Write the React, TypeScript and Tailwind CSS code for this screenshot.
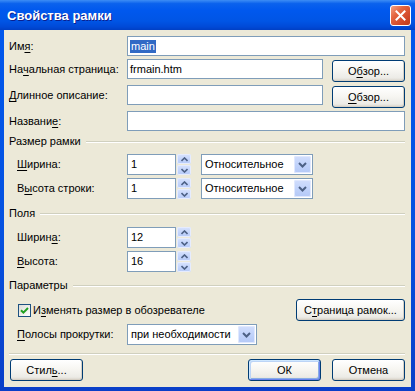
import React from "react";

const U = ({ children }: { children: React.ReactNode }) => (
  <span className="underline underline-offset-[2px] decoration-[1px]">{children}</span>
);

function XPButton({
  children,
  className,
  def,
}: {
  children: React.ReactNode;
  className: string;
  def?: boolean;
}) {
  return (
    <div
      className={
        "h-[22px] shrink-0 rounded-[3px] border border-[#003c74] bg-[linear-gradient(180deg,#ffffff_0%,#f7f6f2_45%,#ecebe6_85%,#d8d2c7_100%)] flex items-center justify-center " +
        (def
          ? "shadow-[inset_1px_1px_0_#cee7ff,inset_-1px_-1px_0_#6982ee,inset_2px_2px_0_#bcd4f6,inset_-2px_-2px_0_#89ade4] "
          : "shadow-[inset_-1px_-1px_0_#d6d0c5] ") +
        className
      }
    >
      {children}
    </div>
  );
}

function Input({ className, children }: { className: string; children?: React.ReactNode }) {
  return (
    <div
      className={
        "h-[20px] shrink-0 border border-[#7f9db9] bg-white flex items-center pl-[2px] leading-[13px] " + className
      }
    >
      {children}
    </div>
  );
}

function Header({ children, mt }: { children: React.ReactNode; mt: string }) {
  return (
    <div className={"h-[13px] flex items-center " + mt}>
      <span className="leading-[13px]">{children}</span>
      <div className="flex-1 ml-[5px] flex flex-col">
        <div className="h-px bg-[#d0d0bf]" />
        <div className="h-px bg-white" />
      </div>
    </div>
  );
}

function Chevron() {
  return (
    <svg width="9" height="6" viewBox="0 0 9 6">
      <path d="M1 1 L4.5 4.5 L8 1" fill="none" stroke="#4d6185" strokeWidth="2" />
    </svg>
  );
}

function Dropdown({ text, className }: { text: string; className: string }) {
  return (
    <div
      className={
        "h-[21px] shrink-0 border border-[#7f9db9] bg-white flex items-center pl-[3px] pr-[1px] " + className
      }
    >
      <span className="flex-1 leading-[13px]">{text}</span>
      <div className="w-[17px] h-[17px] rounded-[2px] bg-[linear-gradient(180deg,#d2defc_0%,#c1d3fb_50%,#b4c8f6_100%)] shadow-[inset_0_0_0_1px_#e0e8fe] flex items-center justify-center">
        <Chevron />
      </div>
    </div>
  );
}

function Spin({ value }: { value: string }) {
  return (
    <div className="flex h-[21px] shrink-0">
      <div className="w-[49px] h-[21px] border border-[#7f9db9] bg-white flex items-center pl-[3px] leading-[13px]">
        {value}
      </div>
      <div className="ml-px w-[14px] h-[21px] flex flex-col gap-px">
        <div className="flex-1 rounded-[2px] bg-[linear-gradient(180deg,#d8e3fd_0%,#c1d3fb_60%,#b6caf7_100%)] shadow-[inset_0_0_0_1px_#e6ecfe] flex items-center justify-center">
          <svg width="7" height="5" viewBox="0 0 7 5">
            <path d="M0.5 4 L3.5 1 L6.5 4" fill="none" stroke="#4d6185" strokeWidth="1.6" />
          </svg>
        </div>
        <div className="flex-1 rounded-[2px] bg-[linear-gradient(180deg,#d8e3fd_0%,#c1d3fb_60%,#b6caf7_100%)] shadow-[inset_0_0_0_1px_#e6ecfe] flex items-center justify-center">
          <svg width="7" height="5" viewBox="0 0 7 5">
            <path d="M0.5 1 L3.5 4 L6.5 1" fill="none" stroke="#4d6185" strokeWidth="1.6" />
          </svg>
        </div>
      </div>
    </div>
  );
}

export default function App() {
  return (
    <div className="w-[415px] h-[391px] flex flex-col bg-[linear-gradient(180deg,#0058ee_0%,#0652e0_60%,#0a3fc8_100%)] font-['Liberation_Sans',Arial,sans-serif] text-[11px] text-black overflow-hidden">
      {/* Title bar */}
      <div className="h-[30px] shrink-0 flex items-start bg-[linear-gradient(180deg,#3d8df5_0%,#0b62ed_12%,#0058ee_35%,#0055e5_70%,#0049d6_90%,#003fc4_100%)]">
        <span className="ml-[7px] mt-[8px] flex-1 text-white font-bold text-[13px] leading-[15px] [text-shadow:1px_1px_0_#0a1f8f]">
          Свойства рамки
        </span>
        <div className="mt-[5px] mr-[4px] w-[21px] h-[21px] rounded-[3px] border border-white bg-[linear-gradient(135deg,#f3a184_0%,#e4653f_35%,#d2492a_70%,#c03b1a_100%)] flex items-center justify-center">
          <svg width="11" height="11" viewBox="0 0 11 11">
            <path d="M1.5 1.5 L9.5 9.5 M9.5 1.5 L1.5 9.5" stroke="#ffffff" strokeWidth="2" strokeLinecap="square" />
          </svg>
        </div>
      </div>

      {/* Client */}
      <div className="flex-1 mx-[4px] mb-[4px] bg-[#ece9d8] flex flex-col pl-[5px] pr-[6px]">
        {/* Имя */}
        <div className="mt-[6px] h-[20px] flex">
          <div className="w-[118px] shrink-0 flex items-center">
            Им<U>я</U>:
          </div>
          <Input className="flex-1">
            <span className="bg-[#316ac5] text-white pl-px pr-px leading-[13px]">main</span>
          </Input>
        </div>

        {/* Начальная страница */}
        <div className="mt-[3px] h-[23px] flex items-start">
          <div className="w-[118px] h-[20px] shrink-0 flex items-center">
            На<U>ч</U>альная страница:
          </div>
          <Input className="w-[196px]">frmain.htm</Input>
          <XPButton className="ml-[9px] mt-px w-[73px]">
            О<U>б</U>зор...
          </XPButton>
        </div>

        {/* Длинное описание */}
        <div className="mt-[3px] h-[23px] flex items-start">
          <div className="w-[118px] h-[20px] shrink-0 flex items-center">
            <U>Д</U>линное описание:
          </div>
          <Input className="w-[196px]" />
          <XPButton className="ml-[9px] mt-px w-[73px]">
            <U>О</U>бзор...
          </XPButton>
        </div>

        {/* Название */}
        <div className="mt-[3px] h-[20px] flex">
          <div className="w-[118px] shrink-0 flex items-center">
            Названи<U>е</U>:
          </div>
          <Input className="flex-1" />
        </div>

        <Header mt="mt-[4px]">Размер рамки</Header>

        <div className="mt-[6px] h-[21px] flex items-center">
          <div className="w-[118px] shrink-0 pl-[8px]">
            <U>Ш</U>ирина:
          </div>
          <Spin value="1" />
          <Dropdown className="ml-[10px] w-[112px]" text="Относительное" />
        </div>

        <div className="mt-[3px] h-[21px] flex items-center">
          <div className="w-[118px] shrink-0 pl-[8px]">
            В<U>ы</U>сота строки:
          </div>
          <Spin value="1" />
          <Dropdown className="ml-[10px] w-[112px]" text="Относительное" />
        </div>

        <Header mt="mt-[8px]">Поля</Header>

        <div className="mt-[7px] h-[21px] flex items-center">
          <div className="w-[118px] shrink-0 pl-[8px]">
            Ширин<U>а</U>:
          </div>
          <Spin value="12" />
        </div>

        <div className="mt-[3px] h-[21px] flex items-center">
          <div className="w-[118px] shrink-0 pl-[8px]">
            <U>В</U>ысота:
          </div>
          <Spin value="16" />
        </div>

        <Header mt="mt-[7px]">Параметры</Header>

        <div className="mt-[7px] h-[22px] flex items-center">
          <div className="ml-[9px] w-[13px] h-[13px] border border-[#1c5180] bg-[linear-gradient(135deg,#dcdcd7_0%,#f2f2ee_60%,#ffffff_100%)] flex items-center justify-center">
            <svg width="9" height="9" viewBox="0 0 9 9">
              <path d="M1 4.2 L3.4 6.6 L8 2" fill="none" stroke="#21a121" strokeWidth="2" />
            </svg>
          </div>
          <span className="ml-[2px]">
            И<U>з</U>менять размер в обозревателе
          </span>
          <XPButton className="ml-auto w-[109px]">
            С<U>т</U>раница рамок...
          </XPButton>
        </div>

        <div className="mt-[3px] h-[21px] flex items-center">
          <div className="w-[118px] shrink-0 pl-[8px]">
            <U>П</U>олосы прокрутки:
          </div>
          <Dropdown className="w-[130px]" text="при необходимости" />
        </div>

        <div className="mt-[8px] flex flex-col">
          <div className="h-px bg-[#d0d0bf]" />
          <div className="h-px bg-white" />
        </div>

        <div className="mt-[4px] h-[22px] flex items-center">
          <XPButton className="ml-px w-[73px]">
            Стил<U>ь</U>...
          </XPButton>
          <div className="flex-1" />
          <XPButton def className="w-[73px]">
            ОК
          </XPButton>
          <XPButton className="ml-[11px] w-[73px]">Отмена</XPButton>
        </div>
      </div>
    </div>
  );
}
